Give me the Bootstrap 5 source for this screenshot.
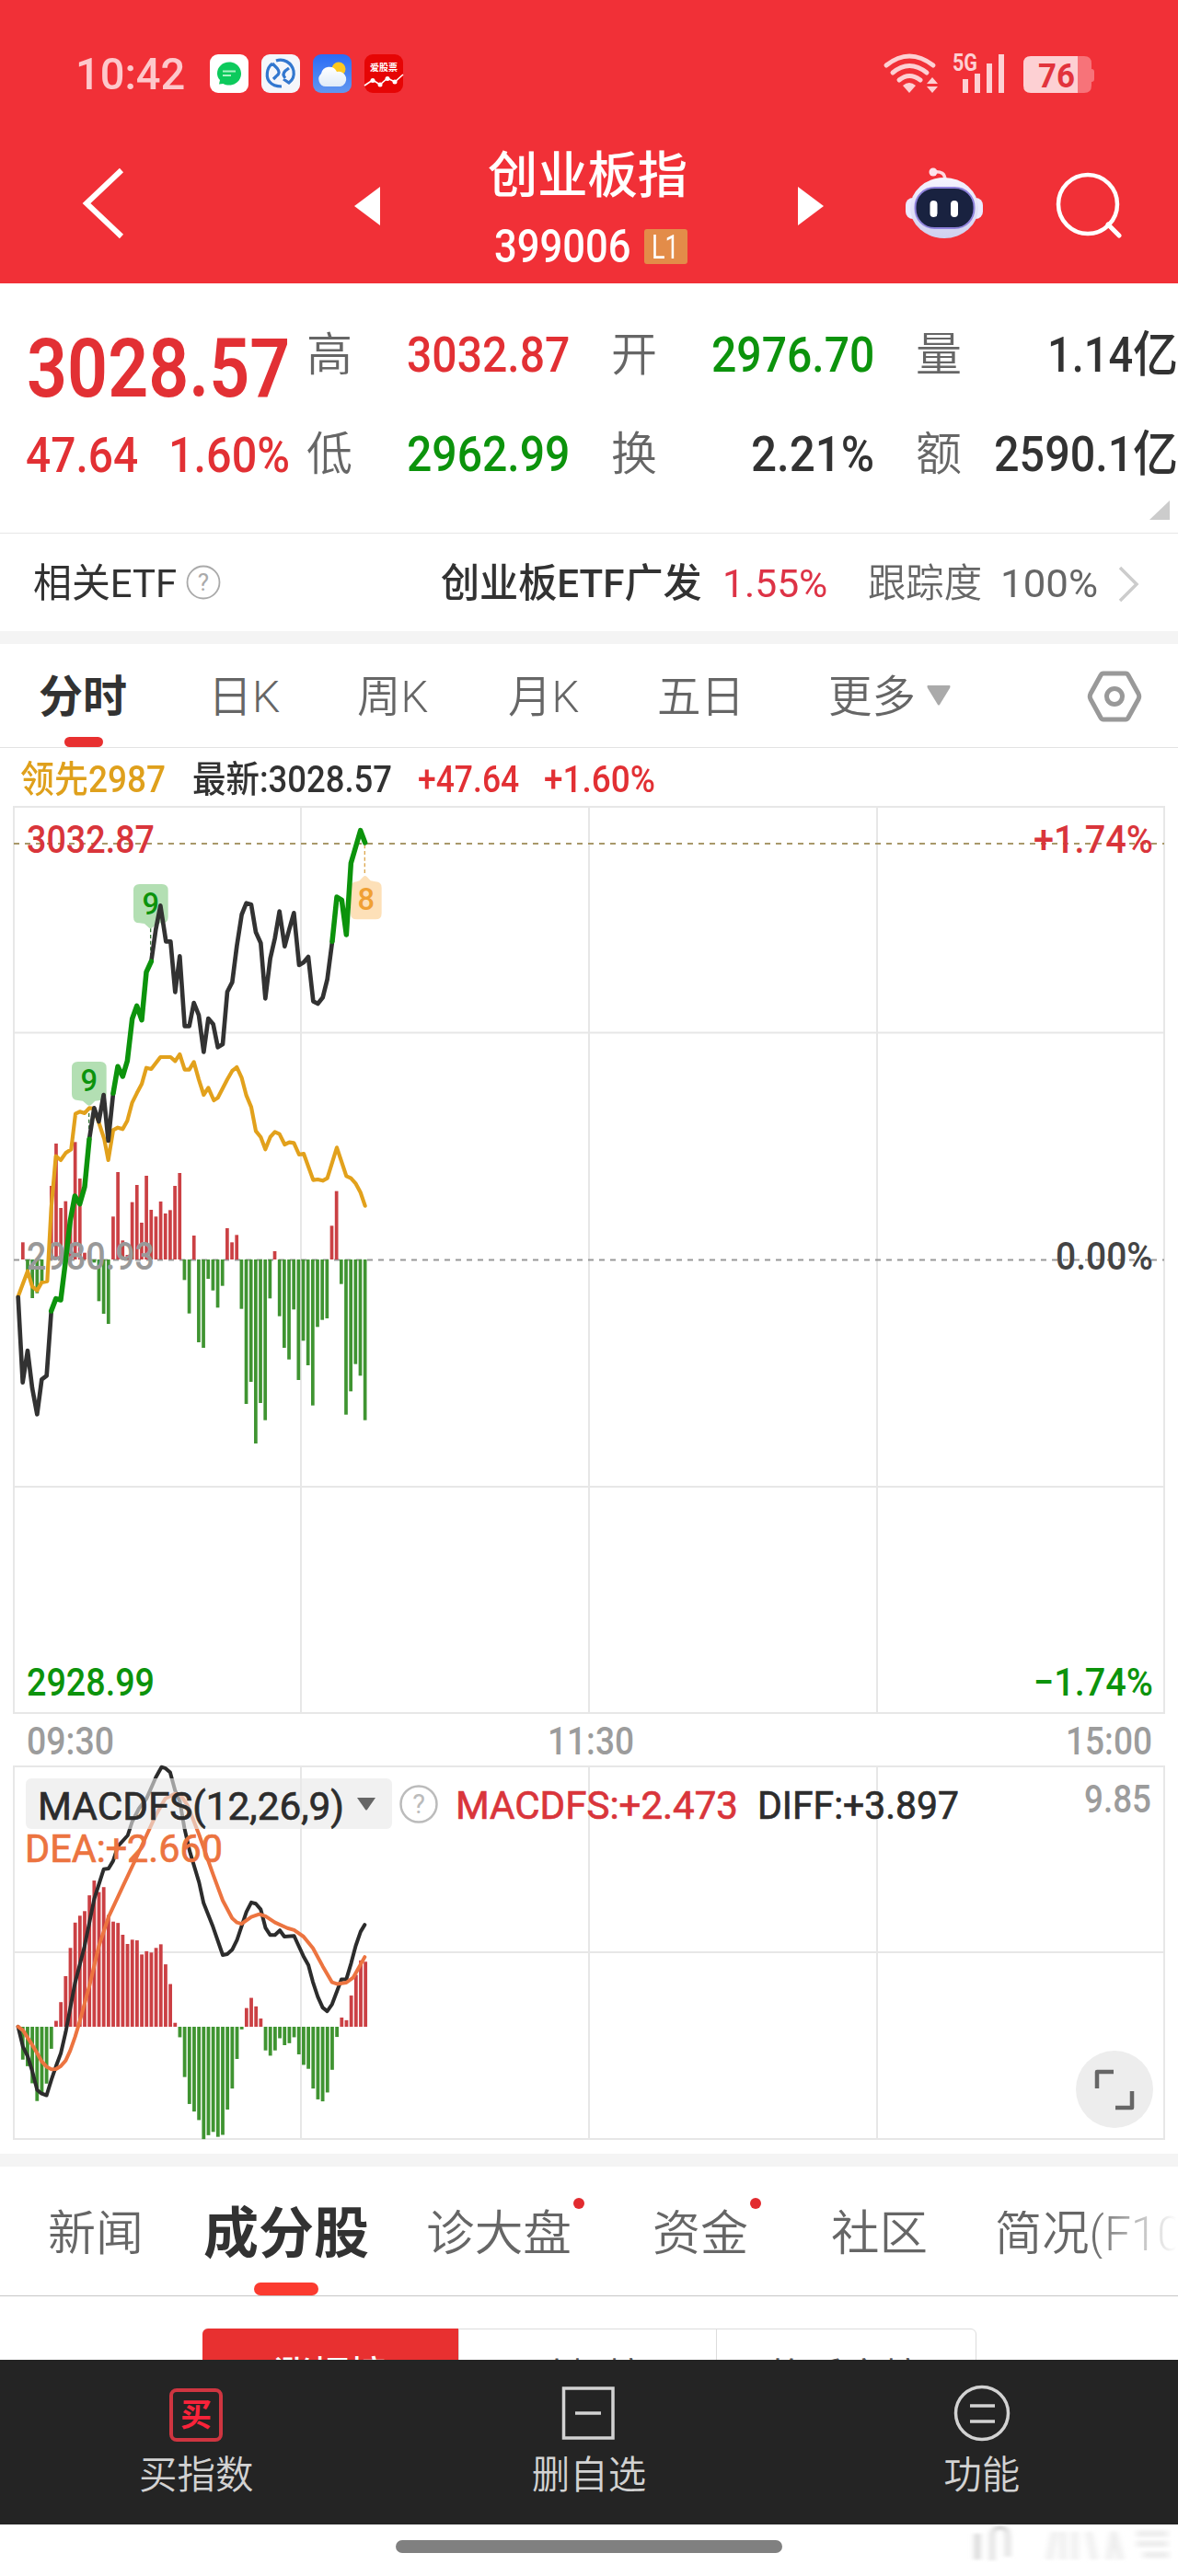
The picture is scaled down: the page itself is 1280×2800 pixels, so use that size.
<!DOCTYPE html>
<html lang="zh-CN">
<head>
<meta charset="utf-8">
<meta name="viewport" content="width=device-width, initial-scale=1">
<title>创业板指 399006</title>
<link href="https://cdn.jsdelivr.net/npm/bootstrap@5.3.0/dist/css/bootstrap.min.css" rel="stylesheet">
<style>
body{width:1280px;height:2800px;overflow:hidden;background:#fff;color:#323232;font-family:Roboto,"Noto Sans CJK SC",sans-serif;line-height:1}
svg{display:block;flex:none;overflow:visible}
svg text{font-family:Roboto,"Noto Sans CJK SC",sans-serif}
.fit{display:inline-block;white-space:nowrap;transform-origin:0 50%;flex:none}
.up{color:#e23034}.down{color:#0c930c}.muted{color:#666}
.top-area{height:308px;background:#f13037;color:#fff}
.status{height:120px;padding:40px 90px 0 82px}
.clock{font-size:49px;font-weight:500;color:#fdc8cb}
.app-icons{gap:14px;margin-left:27px}
.title-bar{height:188px;padding-left:88px}
.title-box{width:220px;height:188px;margin-left:117px;padding-top:42px}
.idx-name{font-size:54px;font-weight:500;height:60px;line-height:60px}
.idx-code{font-size:50px;font-weight:500;height:42px;margin-top:25px;padding-left:7px;gap:14px}
.lvl{width:47px;height:38px;background:#e38c49;border-radius:3px;font-size:37px;font-weight:400}
.quote{height:272px;border-bottom:1px solid #e6e6e6;position:relative}
.last-box{width:316px;padding-left:29px}
.last-price{font-size:89px;font-weight:600;height:100px;margin-top:42px}
.last-chg{font-size:53px;font-weight:500;height:60px;margin-top:15px}
.stat-row{height:108px;font-size:53px;font-weight:500}
.stat-lab{font-size:50px;font-weight:350;color:#666;width:50px}
.stats{width:964px;padding-top:24px;padding-left:17px}
.v1{width:236px}.g1{margin-left:45px}
.corner{position:absolute;right:9px;bottom:14px}
.etf{height:106px;font-size:43px;padding:3px 42px 0 36px}
.band{height:14px;background:#f4f4f4}
.ktabs{height:113px;border-bottom:1px solid #e3e3e3;padding:2px 40px 0 42px;font-size:48px;color:#666;font-weight:350}
.ktabs>span{height:110px;position:relative;padding-top:2px}
.on-tab{font-weight:700;color:#323232}
.on-tab::after{content:"";position:absolute;left:50%;bottom:0;border-radius:6px;background:#e83030}
.ktabs .on-tab::after{width:42px;height:11px;margin-left:-20px}
.legend-row{height:63px;padding:7px 0 0 22px;font-size:40px;font-weight:500}
.btabs{height:141px;border-bottom:1px solid #c6c6c6;padding-left:52px;font-size:52px;color:#666;font-weight:350}
.btabs>span{height:140px;position:relative;white-space:nowrap;padding-top:7px}
.btabs .on-tab{font-size:60px}
.btabs .on-tab::after{width:70px;height:14px;margin-left:-35px;border-radius:7px;background:#fb3b30}
.dot::after{content:"";position:absolute;width:12px;height:12px;border-radius:50%;background:#e22b2f;top:34px;right:-14px}
.fade-end{background:linear-gradient(90deg,#666 0 105px,#fff 200px);-webkit-background-clip:text;background-clip:text;color:transparent}
.ranks{height:69px;padding-top:35px;overflow:hidden}
.seg{width:841px;height:80px;border:1px solid #dcdcdc;border-radius:6px}
.seg>span{height:80px;padding-top:32px;font-size:41px;color:#555;border-right:1px solid #dcdcdc;text-align:center}
.seg>span:first-child{background:#e83030;color:#fff;margin:-1px 0 0 -1px;border-radius:6px 0 0 0;font-weight:500;padding-top:31px}
.seg>span:last-child{border:0}
.foot{height:179px;background:#242424;color:#d2d2d2;font-size:41.5px;font-weight:350}
.foot>div{padding-top:27px;gap:16px}
.home{height:56px;padding-bottom:8px}
.pill{width:420px;height:14px;border-radius:7px;background:#808080;margin-left:430px}
</style>
<script src="https://cdn.jsdelivr.net/npm/bootstrap@5.3.0/dist/js/bootstrap.bundle.min.js"></script>
</head>
<body>
<header class="top-area">
  <div class="status d-flex justify-content-between align-items-center">
    <div class="d-flex align-items-center">
      <span class="clock fit" data-w="119">10:42</span>
      <div class="app-icons d-flex">
        <svg width="42" height="42" viewBox="0 0 42 42"><rect width="42" height="42" rx="9" fill="#fff"/><path d="M21 8.500c7.500 0 13 5.400 13 12.500s-5.500 12.500-13 12.500c-2.500 0-4.500-.5-6.500-1.500l-4.500.5 1-4.500C9 26 8 23.500 8 21 8 14 13.500 8.500 21 8.500Z" fill="#0cca5c"/><path d="M14 18.500h14M14 23h9" stroke="#a9f3c4" stroke-width="2"/></svg>
        <svg width="42" height="42" viewBox="0 0 42 42"><rect width="42" height="42" rx="9" fill="#f4f6fb"/><g fill="none" stroke="#3277cf" stroke-width="3.200"><path d="M16 7C24 4 33 9 35 18c1 6-1 10-5 13l-6-4M12 10C5 15 5 26 9 30c4 5 9 5 13 5M12 10l5 5c3 4 3 6-1 9l-3 3M30 15l-4 3c-3 3-2 6 0 8"/></g></svg>
        <svg width="42" height="42" viewBox="0 0 42 42"><defs><linearGradient id="sky" x2="0" y2="1"><stop stop-color="#2a6bf6"/><stop offset="1" stop-color="#6197f0"/></linearGradient><linearGradient id="cl" x2="0" y2="1"><stop stop-color="#fff"/><stop offset="1" stop-color="#e0ebf8"/></linearGradient></defs><rect width="42" height="42" rx="9" fill="url(#sky)"/><circle cx="28" cy="16" r="7.500" fill="#fdc81f"/><path d="M14 35a8 8 0 0 1-5-14 9 9 0 0 1 17-2 8 8 0 0 1 4 16Z" fill="url(#cl)"/></svg>
        <svg width="42" height="42" viewBox="0 0 42 42"><rect width="42" height="42" rx="9" fill="#e60505"/><text x="6" y="17.500" font-size="10" font-weight="700" fill="#fff" textLength="30">爱股票</text><path d="m0 34 9-6 8 5 8-7 8 4 9-8" fill="none" stroke="#fff" stroke-width="1.600"/><g fill="#fff"><circle cx="9" cy="28.500" r="2.500"/><circle cx="17" cy="33" r="2.500"/><circle cx="25" cy="26.500" r="2.500"/><circle cx="33" cy="30" r="2.500"/></g></svg>
      </div>
    </div>
    <svg width="232" height="46" viewBox="955 57 232 46">
      <g fill="none" stroke="#fdd0d3" stroke-width="5" stroke-linecap="round"><path d="M960 71Q985 51 1011 71M967 79Q985 64 1004 79M974 87Q985 78 997 87"/></g>
      <path d="M978 93q7-6 14 0l-7 8Z" fill="#fdd0d3"/><path d="m1010 84 6 7h-12ZM1010 101l6-7h-12Z" fill="#fdd0d3"/>
      <text x="1032" y="76.500" font-size="25" font-weight="700" fill="#fdd0d3" textLength="27" lengthAdjust="spacingAndGlyphs">5G</text>
      <path d="M1043 86h6v15h-6ZM1056 80h6v21h-6ZM1069 69h6v32h-6ZM1082 59h6v42h-6Z" fill="#fdd0d3"/>
      <path d="M1168 61h7q8 0 8 8v24q0 8-8 8h-7Zm15 14q3 0 3 3v8q0 3-3 3Z" fill="#f77379"/>
      <path d="M1168 61h-51q-8 0-8 8v24q0 8 8 8h51Z" fill="#fdd0d3"/>
      <text x="1125" y="94.500" font-size="37" font-weight="700" fill="#e2333c" textLength="40" lengthAdjust="spacingAndGlyphs">76</text>
    </svg>
  </div>
  <div class="title-bar d-flex align-items-start">
    <svg width="48" height="80" viewBox="86 181 48 80" style="margin-top:61px"><path d="M130 185 92 221 130 257" fill="none" stroke="#fff" stroke-width="6"/></svg>
    <svg width="28" height="42" viewBox="0 0 28 42" style="margin:83px 0 0 249px"><path d="M28 0v42L0 21Z" fill="#fff"/></svg>
    <div class="title-box">
      <div class="idx-name"><span class="fit" data-w="217">创业板指</span></div>
      <div class="idx-code d-flex align-items-center"><span class="fit" data-w="149">399006</span><span class="lvl d-flex align-items-center justify-content-center"><span class="fit" data-w="30">L1</span></span></div>
    </div>
    <svg width="28" height="42" viewBox="0 0 28 42" style="margin:83px 0 0 117px"><path d="M0 0v42l28-21Z" fill="#fff"/></svg>
    <svg width="88" height="82" viewBox="981 180 88 82" style="margin:60px 0 0 87px">
      <defs><linearGradient id="hd" x2="0" y2="1"><stop stop-color="#f6f4ff"/><stop offset="1" stop-color="#cfd0ef"/></linearGradient></defs>
      <path d="M1013 187q13-2 13 9" fill="none" stroke="#ffd9e0" stroke-width="3.500"/><circle cx="1013" cy="187" r="4.500" fill="#fde3ec"/>
      <rect x="983" y="215" width="84" height="23" rx="8" fill="#eceaff"/><ellipse cx="1025" cy="226" rx="37" ry="33" fill="url(#hd)"/>
      <rect x="993.500" y="204" width="64" height="44" rx="21" fill="#192240" stroke="#8f82dc" stroke-width="2"/>
      <path d="M1013.500 222v10M1036 222v10" stroke="#fff" stroke-width="8" stroke-linecap="round"/>
    </svg>
    <svg width="74" height="74" viewBox="1145 186 74 74" style="margin:66px 0 0 77px"><circle cx="1180" cy="222" r="32" fill="none" stroke="#fff" stroke-width="4.500"/><path d="m1202 244 12 12" stroke="#fff" stroke-width="5" stroke-linecap="round"/></svg>
  </div>
</header>

<section class="quote d-flex">
  <div class="last-box up">
    <div class="last-price d-flex align-items-center"><span class="fit" data-w="286">3028.57</span></div>
    <div class="last-chg d-flex align-items-center"><span class="fit" data-w="122" style="margin-left:-1px">47.64</span><span class="fit" data-w="132" style="margin-left:33px">1.60%</span></div>
  </div>
  <div class="stats">
    <div class="stat-row d-flex align-items-center">
      <span class="stat-lab">高</span><span class="v1 text-end up"><span class="fit" data-w="177">3032.87</span></span>
      <span class="stat-lab g1">开</span><span class="v1 text-end down"><span class="fit" data-w="177">2976.70</span></span>
      <span class="stat-lab g1">量</span><span class="flex-grow-1 text-end"><span class="fit" data-w="93">1.14</span><span class="fit" data-w="49">亿</span></span>
    </div>
    <div class="stat-row d-flex align-items-center">
      <span class="stat-lab">低</span><span class="v1 text-end down"><span class="fit" data-w="177">2962.99</span></span>
      <span class="stat-lab g1">换</span><span class="v1 text-end"><span class="fit" data-w="134">2.21%</span></span>
      <span class="stat-lab g1">额</span><span class="flex-grow-1 text-end"><span class="fit" data-w="151">2590.1</span><span class="fit" data-w="49">亿</span></span>
    </div>
  </div>
  <svg class="corner" width="22" height="21" viewBox="0 0 22 21"><path d="M22 0v21H0Z" fill="#ccc"/></svg>
</section>

<section class="etf d-flex align-items-center">
  <span class="fit" data-w="156">相关ETF</span>
  <svg width="38" height="38" viewBox="0 0 38 38" style="margin:-3px 0 0 10px"><circle cx="19" cy="19" r="17.500" fill="none" stroke="#aaa" stroke-width="1.800"/><text x="19" y="28" text-anchor="middle" font-size="26" fill="#aaa">?</text></svg>
  <span class="fit fw-medium" data-w="284" style="margin-left:239px;font-weight:500">创业板ETF广发</span>
  <span class="fit" data-w="114" style="margin-left:22px;color:#dd3346">1.55%</span>
  <span class="fit muted" data-w="124" style="margin-left:44px;font-weight:350">跟踪度</span>
  <span class="fit muted" data-w="106" style="margin-left:20px">100%</span>
  <svg class="ms-auto" width="24" height="40" viewBox="0 0 24 40"><path d="m3 2 18 18L3 38" fill="none" stroke="#ccc" stroke-width="3.500"/></svg>
</section>
<div class="band"></div>

<nav class="ktabs d-flex">
  <span class="d-flex align-items-center on-tab">分时</span>
  <span class="d-flex align-items-center" style="margin-left:88px"><span class="fit" data-w="78">日K</span></span>
  <span class="d-flex align-items-center" style="margin-left:84px"><span class="fit" data-w="77">周K</span></span>
  <span class="d-flex align-items-center" style="margin-left:86px"><span class="fit" data-w="77">月K</span></span>
  <span class="d-flex align-items-center" style="margin-left:85px"><span class="fit" data-w="95">五日</span></span>
  <span class="d-flex align-items-center" style="margin-left:91px"><span class="fit" data-w="95">更多</span><svg width="26" height="22" viewBox="0 0 26 22" style="margin:-4px 0 0 12px"><path d="M1 0h24q1 1 0 3L14 21q-1 1-2 0L1 3Q0 1 1 0Z" fill="#aaa"/></svg></span>
  <span class="d-flex align-items-center ms-auto"><svg width="58" height="56" viewBox="0 0 58 56" style="margin-top:-3px"><path d="M17 3h24q2 0 3 2l11 20q1.500 3 0 6L44 51q-1 2-3 2H17q-2 0-3-2L3 31q-1.500-3 0-6L14 5q1-2 3-2Z" fill="none" stroke="#999" stroke-width="5"/><circle cx="29" cy="28" r="8.500" fill="none" stroke="#999" stroke-width="5"/></svg></span>
</nav>

<div class="legend-row d-flex align-items-center">
  <span class="fit" data-w="158" style="color:#dfa01c">领先2987</span>
  <span class="fit" data-w="217" style="margin-left:29px">最新:3028.57</span>
  <span class="fit up" data-w="110" style="margin-left:28px">+47.64</span>
  <span class="fit up" data-w="121" style="margin-left:27px">+1.60%</span>
</div>

<svg id="chart" width="1280" height="1465" viewBox="0 876 1280 1465">
  <g stroke="#e7e7e7" stroke-width="2" fill="none">
    <path d="M15 877H1265V1862H15ZM327 877V1862M640 877V1862M953 877V1862M15 1122.500H1265M15 1616H1265"/>
    <path d="M15 1920H1265V2325H15ZM327 1920V2325M640 1920V2325M953 1920V2325M15 2122H1265" />
  </g>
  <path d="M15 917H1265" stroke="#a8986a" stroke-width="2" stroke-dasharray="6 6"/>
  <path d="M15 1369.500H1265" stroke="#999" stroke-width="2" stroke-dasharray="6 6"/>
  <g id="vol"></g>
  <g font-size="42" font-weight="500">
    <text x="29" y="1380" fill="#999" textLength="139" lengthAdjust="spacingAndGlyphs">2980.93</text>
    <text x="29" y="927" fill="#d9353b" textLength="139" lengthAdjust="spacingAndGlyphs">3032.87</text>
    <text x="29" y="1843" fill="#0c930c" textLength="139" lengthAdjust="spacingAndGlyphs">2928.99</text>
    <text x="1123" y="927" fill="#d9353b" textLength="130" lengthAdjust="spacingAndGlyphs">+1.74%</text>
    <text x="1147" y="1380" fill="#444" textLength="106" lengthAdjust="spacingAndGlyphs">0.00%</text>
    <text x="1123" y="1843" fill="#0c930c" textLength="130" lengthAdjust="spacingAndGlyphs">−1.74%</text>
  </g>
  <g font-size="42" font-weight="500" fill="#9c9c9c">
    <text x="29" y="1907" textLength="95" lengthAdjust="spacingAndGlyphs">09:30</text>
    <text x="595" y="1907" textLength="94" lengthAdjust="spacingAndGlyphs">11:30</text>
    <text x="1158" y="1907" textLength="94" lengthAdjust="spacingAndGlyphs">15:00</text>
    <text x="1178" y="1970" textLength="73" lengthAdjust="spacingAndGlyphs">9.85</text>
  </g>
  <g transform="translate(0 870) scale(.33333)">
    <g fill="#b3dfb3"><path d="M254 852H327Q347 852 347 872V958Q347 978 327 978L310 980 297 993Q291 998 285 993L270 980 254 978Q234 978 234 958V872Q234 852 254 852Z"/><path d="M455 273H528Q548 273 548 293V380Q548 400 528 400L511 402 497 415Q491 420 485 415L471 402 455 400Q435 400 435 380V293Q435 273 455 273Z"/></g>
    <path d="M1163 265 1172 262 1184 249Q1190 243 1196 249L1208 262 1224 265Q1244 265 1244 285V368Q1244 388 1224 388H1163Q1143 388 1143 368V285Q1143 265 1163 265Z" fill="#fde0b8"/>
    <g font-size="98" font-weight="500" text-anchor="middle"><text x="290" y="948" fill="#0c930c">9</text><text x="491" y="371" fill="#0c930c">9</text><text x="1193" y="357" fill="#f0a034">8</text></g>
    <path d="M290 1000V1100M491 418V520" stroke="#3a7a3a" stroke-width="4" stroke-dasharray="12 8"/><path d="M1189 145V245" stroke="#dda850" stroke-width="4" stroke-dasharray="12 8"/>
    <g fill="none" stroke-linejoin="round" stroke-linecap="round">
      <polyline stroke="#e2a11c" stroke-width="12.500" points="59,1618 90,1535 105,1585 121,1598 136,1572 154,1568 167,1330 182,1160 198,1173 214,1150 232,1138 246,1022 260,1015 276,1020 291,1003 307,1005 322,1050 340,1105 353,1173 369,1075 384,1067 400,1072 415,1045 431,985 446,955 462,925 477,872 493,876 523,837 556,837 571,850 586,828 602,878 617,878 632,853 648,910 664,960 679,937 697,978 710,970 741,910 757,882 772,870 788,905 803,962 819,1000 834,1078 850,1098 865,1138 881,1098 896,1081 911,1088 928,1122 943,1115 958,1117 975,1155 990,1152 1021,1238 1036,1236 1052,1240 1067,1232 1098,1132 1129,1225 1144,1232 1160,1250 1175,1278 1190,1322"/>
      <g stroke="#323232" stroke-width="14">
        <polyline points="59,1620 74,1898 90,1794 105,1916 121,2002 136,1888 152,1876 167,1668"/>
        <polyline points="291,1105 307,1003 322,1047 338,960 353,1110 369,955"/>
        <polyline points="493,525 508,420 523,343 541,460 556,460 571,625 586,508 602,736 617,736 632,660 648,700 664,820 679,711 695,730 710,805 726,795 741,624 757,593 772,475 788,372 803,335 819,340 834,430 850,465 865,646 881,515 896,450 911,362 928,476 943,420 958,367 975,537 990,528 1005,510 1021,655 1036,663 1052,643 1067,583 1083,460"/>
      </g>
      <g stroke="#0c930c" stroke-width="16.500">
        <polyline points="167,1665 182,1625 198,1629 214,1500 229,1370 244,1290 260,1316 276,1260 291,1105"/>
        <polyline points="369,955 384,868 400,900 415,850 431,712 446,670 462,716 477,560 493,525"/>
        <polyline points="1083,460 1098,315 1114,325 1129,438 1144,205 1160,150 1175,98 1190,138"/>
      </g>
    </g>
  </g>
  <g id="macd"></g>
  <g fill="none" stroke-width="4" stroke-linejoin="round" stroke-linecap="round" transform="translate(0 1780) scale(.40816 .35714)">
    <polyline vector-effect="non-scaling-stroke" stroke="#2c2c2c" points="48,1184 61,1245 74,1275 86,1320 99,1377 111,1388 124,1393 137,1345 149,1305 162,1265 175,1200 200,1050 225,940 251,795 276,705 289,703 301,680 314,635 340,602 352,560 370,520 390,490 415,425 430,394 441,398 453,410 466,465 479,500 491,580 505,650 530,745 542,808 567,880 593,966 605,963 618,950 631,920 656,835 669,806 681,810 694,827 707,884 719,905 732,905 745,891 757,910 783,908 795,938 808,970 821,997 833,1048 846,1093 859,1126 871,1137 884,1116 909,1040 922,1040 935,990 947,938 960,895 971,874"/>
    <polyline vector-effect="non-scaling-stroke" stroke="#ec7440" points="48,1184 61,1195 86,1240 99,1265 111,1290 124,1306 137,1314 149,1313 162,1304 175,1287 187,1257 200,1215 213,1165 238,1060 263,940 289,850 327,757 365,665 390,602 415,540 440,490 466,475 480,478 500,512 530,600 567,720 593,800 618,854 631,867 643,871 669,850 690,842 707,848 732,867 765,884 783,890 808,910 833,945 859,1000 884,1049 897,1054 922,1050 940,1035 960,995 971,972"/>
  </g>
  <rect x="28" y="1933" width="398" height="55" rx="6" fill="#e8e8e8" fill-opacity=".62"/>
  <path d="M388 1954h20l-9 13q-1 1-2 0Z" fill="#666"/>
  <circle cx="455" cy="1961" r="19.500" fill="none" stroke="#bbb" stroke-width="2.500"/><text x="455" y="1971" font-size="29" text-anchor="middle" fill="#bbb">?</text>
  <g font-size="42" stroke-width=".7">
    <text x="41" y="1978" fill="#2c2c2c" stroke="#2c2c2c" textLength="333" lengthAdjust="spacingAndGlyphs">MACDFS(12,26,9)</text>
    <text x="495" y="1977" fill="#d9353b" stroke="#d9353b" textLength="307" lengthAdjust="spacingAndGlyphs">MACDFS:+2.473</text>
    <text x="823" y="1977" fill="#2c2c2c" stroke="#2c2c2c" textLength="219" lengthAdjust="spacingAndGlyphs">DIFF:+3.897</text>
    <text x="27" y="2024" fill="#ec7440" stroke="#ec7440" textLength="215" lengthAdjust="spacingAndGlyphs">DEA:+2.660</text>
  </g>
  <circle cx="1211" cy="2271" r="42" fill="#ededed"/><path d="M1192 2270v-18h18M1230 2273v18h-18" fill="none" stroke="#666" stroke-width="4.500" stroke-linejoin="round"/>
</svg>
<div class="band"></div>

<nav class="btabs d-flex">
  <span class="d-flex align-items-center"><span class="fit" data-w="104">新闻</span></span>
  <span class="d-flex align-items-center on-tab" style="margin-left:65px"><span class="fit" data-w="180">成分股</span></span>
  <span class="d-flex align-items-center dot" style="margin-left:62px"><span class="fit" data-w="158">诊大盘</span></span>
  <span class="d-flex align-items-center dot" style="margin-left:88px"><span class="fit" data-w="104">资金</span></span>
  <span class="d-flex align-items-center" style="margin-left:90px"><span class="fit" data-w="105">社区</span></span>
  <span class="d-flex align-items-center" style="margin-left:73px"><span class="fit fade-end" data-w="222">简况(F10)</span></span>
</nav>
<section class="ranks">
  <div class="seg mx-auto d-flex"><span class="col-4">涨幅榜</span><span class="col-4">跌幅榜</span><span class="col-4">换手率榜</span></div>
</section>
<footer class="foot d-flex">
  <div class="col-4 d-flex flex-column align-items-center"><svg width="62" height="62" viewBox="0 0 62 62"><rect x="4" y="6" width="54" height="54" rx="6" fill="none" stroke="#cf3540" stroke-width="4"/><text x="31" y="45" font-size="34" font-weight="700" text-anchor="middle" fill="#f9233a">买</text></svg><span>买指数</span></div>
  <div class="col-4 d-flex flex-column align-items-center"><svg width="62" height="62" viewBox="0 0 62 62"><path d="M3.500 4H57v54H3.500ZM16 31h28" fill="none" stroke="#d2d2d2" stroke-width="3.500"/></svg><span>删自选</span></div>
  <div class="col-4 d-flex flex-column align-items-center"><svg width="62" height="62" viewBox="0 0 62 62"><circle cx="31" cy="31" r="28.500" fill="none" stroke="#d2d2d2" stroke-width="3.500"/><path d="M18 23h27M18 40h27" stroke="#d2d2d2" stroke-width="3.500"/></svg><span>功能</span></div>
</footer>
<div class="home d-flex align-items-center">
  <div class="pill"></div>
  <svg width="230" height="50" viewBox="1050 2746 230 50" style="margin-left:200px">
    <defs><filter id="soft"><feGaussianBlur stdDeviation="3 1.500"/></filter></defs>
    <g filter="url(#soft)" fill="none"><path d="M1062 2757v28" stroke="#ccc" stroke-width="5"/><path d="M1078 2786v-28q2-8 9-8 8 1 8 10v22" stroke="#d2d2d2" stroke-width="4"/><path d="M1140 2785l6-30M1155 2755v30M1168 2785v-30M1183 2755l6 30M1205 2785l5-30 8 30M1235 2757h34M1235 2768h34M1242 2780h28" stroke="#eee" stroke-width="7"/></g>
  </svg>
</div>

<script>
// Condense each label to its column width.
document.querySelectorAll('.fit').forEach(el => {
  const n = el.offsetWidth, w = +el.dataset.w;
  el.style.transform = 'scaleX(' + w / n + ')';
  el.style.marginRight = (w - n) + 'px';
});
// Histogram bars: positive values rise in red, negative ones fall in green.
function bars(id, data, x0, step, base, k, w) {
  document.getElementById(id).innerHTML = data.map((v, i) => {
    const h = Math.abs(v) * k;
    return `<rect x="${x0 + step * i - w / 2}" y="${v > 0 ? base - h : base}" width="${w}" height="${h}" fill="${v > 0 ? '#cb4044' : '#3f9431'}"/>`;
  }).join('');
}
bars('vol', [0,56,-50,-126,-110,-75,0,240,378,168,190,130,383,264,22,28,-10,-136,-177,-210,140,285,62,15,187,243,120,273,162,140,189,150,161,240,282,-67,-176,78,-270,-288,-63,-101,-157,-86,102,56,80,-161,-471,-399,-600,-468,-524,-127,27,-185,-288,-326,-163,-393,-265,-345,-476,-220,-197,-192,110,223,-80,-506,-430,-341,-379,-524], 19.67, 5.164, 1369, 1/3, 3.7);
bars('macd', [0,-100,-120,-172,-226,-205,-173,-67,18,75,154,240,317,338,352,400,445,410,425,340,320,316,280,252,265,263,220,230,226,240,251,190,130,12,-32,-153,-235,-258,-284,-342,-330,-320,-335,-329,-252,-188,-98,-8,57,88,62,25,-72,-88,-72,-35,-56,-50,-32,-84,-116,-128,-188,-221,-227,-200,-131,-31,28,20,95,158,202,198], 19.6, 5.172, 2203, 1/2.8, 3.8);
</script>
</body>
</html>
